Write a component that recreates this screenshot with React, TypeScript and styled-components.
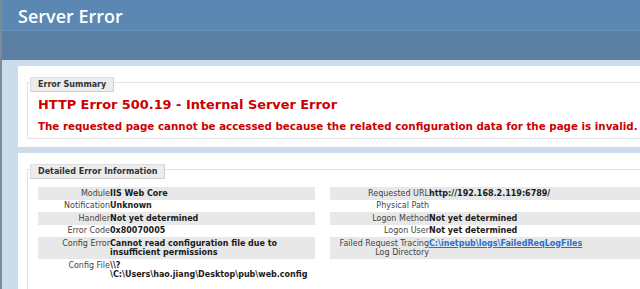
import React from "react";
import styled, { createGlobalStyle } from "styled-components";

const Global = createGlobalStyle`
  html, body { margin: 0; padding: 0; }
  body {
    background: #cbdcec;
    overflow: hidden;
    width: 640px;
    height: 289px;
    font-family: "DejaVu Sans", Verdana, sans-serif;
  }
`;

const Page = styled.div`
  border-left: 2px solid #7c8996;
  height: 289px;
  box-sizing: border-box;
  width: 640px;
  overflow: hidden;
`;

const Header = styled.div`
  height: 30px;
  background: #5b87b3;
  border-bottom: 1px solid #6690ba;
  padding: 0 0 0 16px;
  display: flex;
  align-items: center;
`;

const Title = styled.h1`
  margin: 1px 0 0 0;
  font-family: "Open Sans", "DejaVu Sans", sans-serif;
  font-weight: 600;
  font-size: 18px;
  color: #ffffff;
  line-height: 1;
`;

const Band = styled.div`
  height: 29px;
  background: #5a7fa3;
`;

const Content = styled.div`
  padding: 6px 0 0 16px;
  display: flex;
  flex-direction: column;
  gap: 6px;
`;

const Panel = styled.div`
  background: #ffffff;
  width: 760px;
  padding: 11px 0 8px 9px;
  box-sizing: border-box;
`;

const Fieldset = styled.div<{ $minH?: number }>`
  margin-top: 5px;
  border: 1px solid #e2e2e2;
  padding: 0 10px 6px 10px;
  min-height: ${(p) => p.$minH ?? 0}px;
`;

const Legend = styled.div`
  display: block;
  width: fit-content;
  margin: -6px 0 0 -8px;
  background: #ececec;
  border: 1px solid #cfcfcf;
  border-top-color: #dedede;
  border-left-color: #dedede;
  color: #333;
  font-weight: bold;
  font-size: 8px;
  line-height: 13px;
  padding: 0 7px;
`;

const ErrTitle = styled.h2`
  margin: 5px 0 0 0;
  color: #cc0000;
  font-size: 12.9px;
  font-weight: bold;
  line-height: 16px;
  white-space: nowrap;
`;

const ErrDesc = styled.h3`
  margin: 7px 0 0 0;
  color: #cc0000;
  font-size: 10.3px;
  font-weight: bold;
  line-height: 12px;
  white-space: nowrap;
`;

const Tables = styled.div`
  display: flex;
  align-items: flex-start;
  gap: 15px;
  margin-top: 8px;
`;

const Table = styled.table<{ $w: number }>`
  width: ${(p) => p.$w}px;
  border-collapse: collapse;
  border-spacing: 0;
  font-size: 8px;
  line-height: 9.5px;
`;

const Row = styled.tr<{ $alt?: boolean }>`
  background: ${(p) => (p.$alt ? "#e8e8e8" : "transparent")};
`;

const Label = styled.th<{ $w: number }>`
  width: ${(p) => p.$w}px;
  text-align: right;
  font-weight: normal;
  color: #444;
  padding: 1.5px 0;
  vertical-align: top;
  white-space: nowrap;
`;

const Value = styled.td`
  text-align: left;
  font-weight: bold;
  color: #1a1a1a;
  padding: 1.5px 0;
  vertical-align: top;
  white-space: nowrap;
`;

const Link = styled.a`
  color: #2a6fd0;
  text-decoration: underline;
`;

const left: [string, React.ReactNode][] = [
  ["Module", "IIS Web Core"],
  ["Notification", "Unknown"],
  ["Handler", "Not yet determined"],
  ["Error Code", "0x80070005"],
  ["Config Error", <>Cannot read configuration file due to<br />insufficient permissions</>],
  ["Config File", <>\\?<br />\C:\Users\hao.jiang\Desktop\pub\web.config</>],
];

export default function App() {
  const right: [React.ReactNode, React.ReactNode][] = [
    ["Requested URL", "http://192.168.2.119:6789/"],
    ["Physical Path", ""],
    ["Logon Method", "Not yet determined"],
    ["Logon User", "Not yet determined"],
    [
      <>Failed Request Tracing<br />Log Directory</>,
      <Link href="#">C:\inetpub\logs\FailedReqLogFiles</Link>,
    ],
  ];
  return (
    <Page>
      <Global />
      <Header>
        <Title>Server Error</Title>
      </Header>
      <Band />
      <Content>
        <Panel>
          <Fieldset>
            <Legend>Error Summary</Legend>
            <ErrTitle>HTTP Error 500.19 - Internal Server Error</ErrTitle>
            <ErrDesc>
              The requested page cannot be accessed because the related configuration data for the page is invalid.
            </ErrDesc>
          </Fieldset>
        </Panel>
        <Panel>
          <Fieldset $minH={130}>
            <Legend>Detailed Error Information</Legend>
            <Tables>
              <Table $w={277}>
                <tbody>
                  {left.map(([k, v], i) => (
                    <Row key={i} $alt={i % 2 === 0}>
                      <Label $w={72}>{k}</Label>
                      <Value>{v}</Value>
                    </Row>
                  ))}
                </tbody>
              </Table>
              <Table $w={380}>
                <tbody>
                  {right.map(([k, v], i) => (
                    <Row key={i} $alt={i % 2 === 0}>
                      <Label $w={99}>{k}</Label>
                      <Value>{v}</Value>
                    </Row>
                  ))}
                </tbody>
              </Table>
            </Tables>
          </Fieldset>
        </Panel>
      </Content>
    </Page>
  );
}
